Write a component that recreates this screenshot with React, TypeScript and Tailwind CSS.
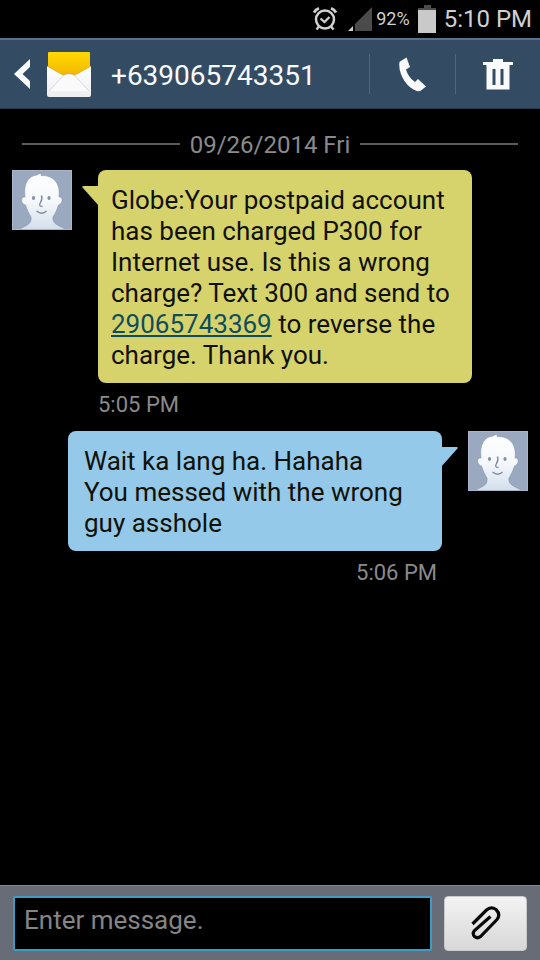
import React from "react";

type Side = "in" | "out";

interface Message {
  id: number;
  side: Side;
  time: string;
  body: React.ReactNode;
}

const messages: Message[] = [
  {
    id: 1,
    side: "in",
    time: "5:05 PM",
    body: (
      <>
        Globe:Your postpaid account
        <br />
        has been charged P300 for
        <br />
        Internet use. Is this a wrong
        <br />
        charge? Text 300 and send to
        <br />
        <a href="tel:29065743369" className="text-[#0f4c5c] underline decoration-2 underline-offset-2">
          29065743369
        </a>{" "}
        to reverse the
        <br />
        charge. Thank you.
      </>
    ),
  },
  {
    id: 2,
    side: "out",
    time: "5:06 PM",
    body: (
      <>
        Wait ka lang ha. Hahaha
        <br />
        You messed with the wrong
        <br />
        guy asshole
      </>
    ),
  },
];

function AlarmIcon() {
  return (
    <svg width="24" height="24" viewBox="0 0 24 24" fill="none" stroke="#d0d0d0" aria-hidden="true">
      <circle cx="12" cy="12.500" r="9" strokeWidth="2.500" />
      <path d="M7.500 11.500l4 3.500 5-5" strokeWidth="2.300" />
      <path d="M1 5.500Q2.600 2.600 6 1.300M23 5.500Q21.400 2.600 18 1.300" strokeWidth="2.800" />
      <path d="M6 19.500l-2.500 3M18 19.500l2.500 3" strokeWidth="2.400" />
    </svg>
  );
}

function SignalIcon() {
  return (
    <svg width="24" height="24" viewBox="0 0 24 24" aria-hidden="true">
      <path d="M24 0V24H7V17z" fill="#4b4b4b" />
      <path d="M5 19V24H0z" fill="#d0d0d0" />
    </svg>
  );
}

function BatteryIcon() {
  return (
    <svg width="18" height="28" viewBox="0 0 18 28" aria-hidden="true">
      <path d="M6 0h7v3h5v3H0V3h6z" fill="#4b4b4b" />
      <path d="M0 5h18v23H0z" fill="#c9c9c9" />
    </svg>
  );
}

function BackIcon() {
  return (
    <svg width="17" height="30" viewBox="0 0 17 30" aria-hidden="true">
      <path d="M16 0v8L8.500 15l7.500 7v8L0 15z" fill="#f8fafc" />
    </svg>
  );
}

function EnvelopeIcon() {
  return (
    <svg width="44" height="45" viewBox="0 0 44 45" aria-hidden="true">
      <defs>
        <linearGradient id="letter" x1="0" y1="0" x2="0" y2="1">
          <stop offset="0" stopColor="#ffd900" />
          <stop offset="1" stopColor="#f2ae00" />
        </linearGradient>
        <linearGradient id="paper" x1="0" y1="0" x2="0" y2="1">
          <stop offset="0" stopColor="#ffffff" />
          <stop offset="1" stopColor="#ededf0" />
        </linearGradient>
      </defs>
      <path d="M2 0h40q1 0 1 1v29H1V1q0-1 1-1z" fill="url(#letter)" />
      <path d="M0 14l16 9q2-1.500 6-1.500t6 1.500l16-9v29q0 2-2 2H2q-2 0-2-2z" fill="url(#paper)" />
      <path d="M2 39L16.500 23.500Q22 20 27.500 23.500L42 39" fill="#fafafa" stroke="#cfcfd2" strokeWidth="0.800" />
      <path d="M0 14l16 9q2-1.500 6-1.500t6 1.500l16-9" fill="none" stroke="#c99618" strokeWidth="0.600" />
    </svg>
  );
}

function PhoneIcon() {
  return (
    <svg width="27" height="35" viewBox="0 0 27 35" aria-hidden="true">
      <path
        d="M1 4.500L7.500 0.500 11 10 7 12.500C8.500 17.500 11.500 22 16 25L19 22 27 29.500 22 33.500Q20.500 34.600 18 34C8 31 -0.500 18 0.300 6.500Q0.300 5 1 4.500z"
        fill="#f8fafc"
      />
    </svg>
  );
}

function TrashIcon() {
  return (
    <svg width="30" height="31" viewBox="0 0 30 31" aria-hidden="true">
      <path
        fillRule="evenodd"
        d="M10 0h10v3h10v3h-3.500v24.500h-23V6H0V3h10zM9.500 10v16h3V10zM17.500 10v16h3V10z"
        fill="#f8fafc"
      />
    </svg>
  );
}

function ClipIcon() {
  return (
    <svg
      width="30"
      height="34"
      viewBox="0 0 30 34"
      fill="none"
      stroke="#0a0a0a"
      strokeWidth="3.200"
      aria-hidden="true"
    >
      <path d="M1.500 18L15.500 4Q20 0 25 3.500 30 8.500 26 13.500L9.500 30.500Q6.500 33 3.500 30.500 1 27.500 3.500 24.500L19.500 10.500" />
    </svg>
  );
}

function Avatar({ id }: { id: string }) {
  return (
    <svg className="size-[60px] shrink-0" viewBox="0 0 60 60" role="img" aria-label="Contact">
      <defs>
        <linearGradient id={id} x1="0" y1="0" x2="0" y2="1">
          <stop offset="0" stopColor="#ffffff" />
          <stop offset="0.500" stopColor="#f5f8fc" />
          <stop offset="1" stopColor="#d3deeb" />
        </linearGradient>
      </defs>
      <path d="M0 0h60v60H0z" fill="#9ba9c0" />
      <path
        d="M13 27C11 13 17 5.500 25 5Q27 3 29.500 3.500L29 5.500C41 5 49 13 47 27 51.500 26 51 34 46.500 35 45 40 43 44 41 47 40 54 46 55 53 59V60H8V59C15 55 20 54 19 47 17 44 15 40 13.500 35 8.500 34 8.500 26 13 27z"
        fill={`url(#${id})`}
        stroke="#8293ae"
        strokeWidth="0.600"
      />
      <ellipse cx="21.500" cy="28" rx="1.600" ry="2" fill="#8390a5" />
      <ellipse cx="37" cy="28" rx="1.600" ry="2" fill="#8390a5" />
      <path
        d="M29.500 25.500Q30.500 30 28.500 32.500 26 36.500 30.500 36.500M24.500 41Q30 45.500 34.500 41"
        fill="none"
        stroke="#7f8ca2"
        strokeWidth="1.400"
      />
      <path d="M0.500 0.500h59v59H0.500z" fill="none" stroke="#a9b5c8" />
    </svg>
  );
}

function Tail({ side }: { side: Side }) {
  return side === "in" ? (
    <svg className="absolute top-4 -left-4" width="17" height="20" viewBox="0 0 17 20" aria-hidden="true">
      <path d="M17 0H1Q-0.500 1 1 2L17 20z" fill="#d6d36c" />
    </svg>
  ) : (
    <svg className="absolute top-4 -right-4" width="17" height="20" viewBox="0 0 17 20" aria-hidden="true">
      <path d="M0 0H16Q17.500 1 16 2L0 20z" fill="#94c9e9" />
    </svg>
  );
}

function MessageRow({ message }: { message: Message }) {
  const incoming = message.side === "in";
  return (
    <li className={incoming ? "flex items-start gap-[26px]" : "flex flex-row-reverse items-start gap-[26px]"}>
      <Avatar id={`face-${message.id}`} />
      <div className={incoming ? "w-[374px]" : "w-[374px] text-right"}>
        <div
          className={
            incoming
              ? "relative rounded-lg bg-[#d6d36c] px-[13px] pt-[15px] pb-3 text-left"
              : "relative rounded-lg bg-[#94c9e9] px-4 pt-[15px] pb-3 text-left"
          }
        >
          <Tail side={message.side} />
          <p className="text-[26px] leading-[31px] whitespace-nowrap text-[#111108]">{message.body}</p>
        </div>
        <time className={incoming ? "block pt-2 text-[22px] leading-7 text-[#8a8a8a]" : "block pt-2 pr-[5px] text-[22px] leading-7 text-[#8a8a8a]"}>
          {message.time}
        </time>
      </div>
    </li>
  );
}

export default function App() {
  return (
    <div className="flex min-h-screen flex-col bg-black font-['Roboto',sans-serif]">
      <div className="flex h-[38px] items-center justify-end pr-2 text-[#d0d0d0]">
        <AlarmIcon />
        <span className="ml-[11px]">
          <SignalIcon />
        </span>
        <span className="ml-1 text-lg">92%</span>
        <span className="ml-2">
          <BatteryIcon />
        </span>
        <span className="ml-2 text-[24px]">5:10 PM</span>
      </div>

      <header className="flex h-[71px] items-center border-t-2 border-b border-t-[#58748c] border-b-[#263b4e] bg-[#344c63]">
        <button type="button" aria-label="Back" className="flex items-center gap-4 pl-[14px]">
          <BackIcon />
          <EnvelopeIcon />
        </button>
        <h1 className="flex-1 pt-1 pl-5 text-[28px] text-[#f8fafc]">+639065743351</h1>
        <button
          type="button"
          aria-label="Call"
          className="flex h-10 w-[86px] items-center justify-center border-l border-[#50677e]"
        >
          <PhoneIcon />
        </button>
        <button
          type="button"
          aria-label="Delete"
          className="flex h-10 w-[85px] items-center justify-center border-l border-[#50677e]"
        >
          <TrashIcon />
        </button>
      </header>

      <main className="flex-1 px-3 pt-[18px]">
        <div className="flex items-center gap-[10px] px-[10px] text-[24px] leading-8 text-[#8a8a8a]">
          <span className="h-0.5 flex-1 bg-[#5c5c5c]" />
          <h2 className="pt-0.5">09/26/2014 Fri</h2>
          <span className="h-0.5 flex-1 bg-[#5c5c5c]" />
        </div>
        <ul className="flex flex-col gap-3 pt-[9px]">
          {messages.map((message) => (
            <MessageRow key={message.id} message={message} />
          ))}
        </ul>
      </main>

      <form
        className="flex h-[75px] items-center gap-3 border-t border-[#858993] bg-[#686c76] px-[13px]"
        onSubmit={(event) => event.preventDefault()}
      >
        <input
          type="text"
          aria-label="Message"
          placeholder="Enter message."
          className="h-[55px] min-w-0 flex-1 rounded-xs border-2 border-[#3b9cc4] bg-black px-[9px] pb-1.5 text-[26px] text-white placeholder:text-[#858585] focus:outline-none"
        />
        <button
          type="button"
          aria-label="Attach"
          className="flex h-[55px] w-[83px] items-center justify-center rounded-sm border border-[#c9c9cb] bg-linear-to-b from-[#f3f3f3] to-[#d8d8d8]"
        >
          <ClipIcon />
        </button>
      </form>
    </div>
  );
}
